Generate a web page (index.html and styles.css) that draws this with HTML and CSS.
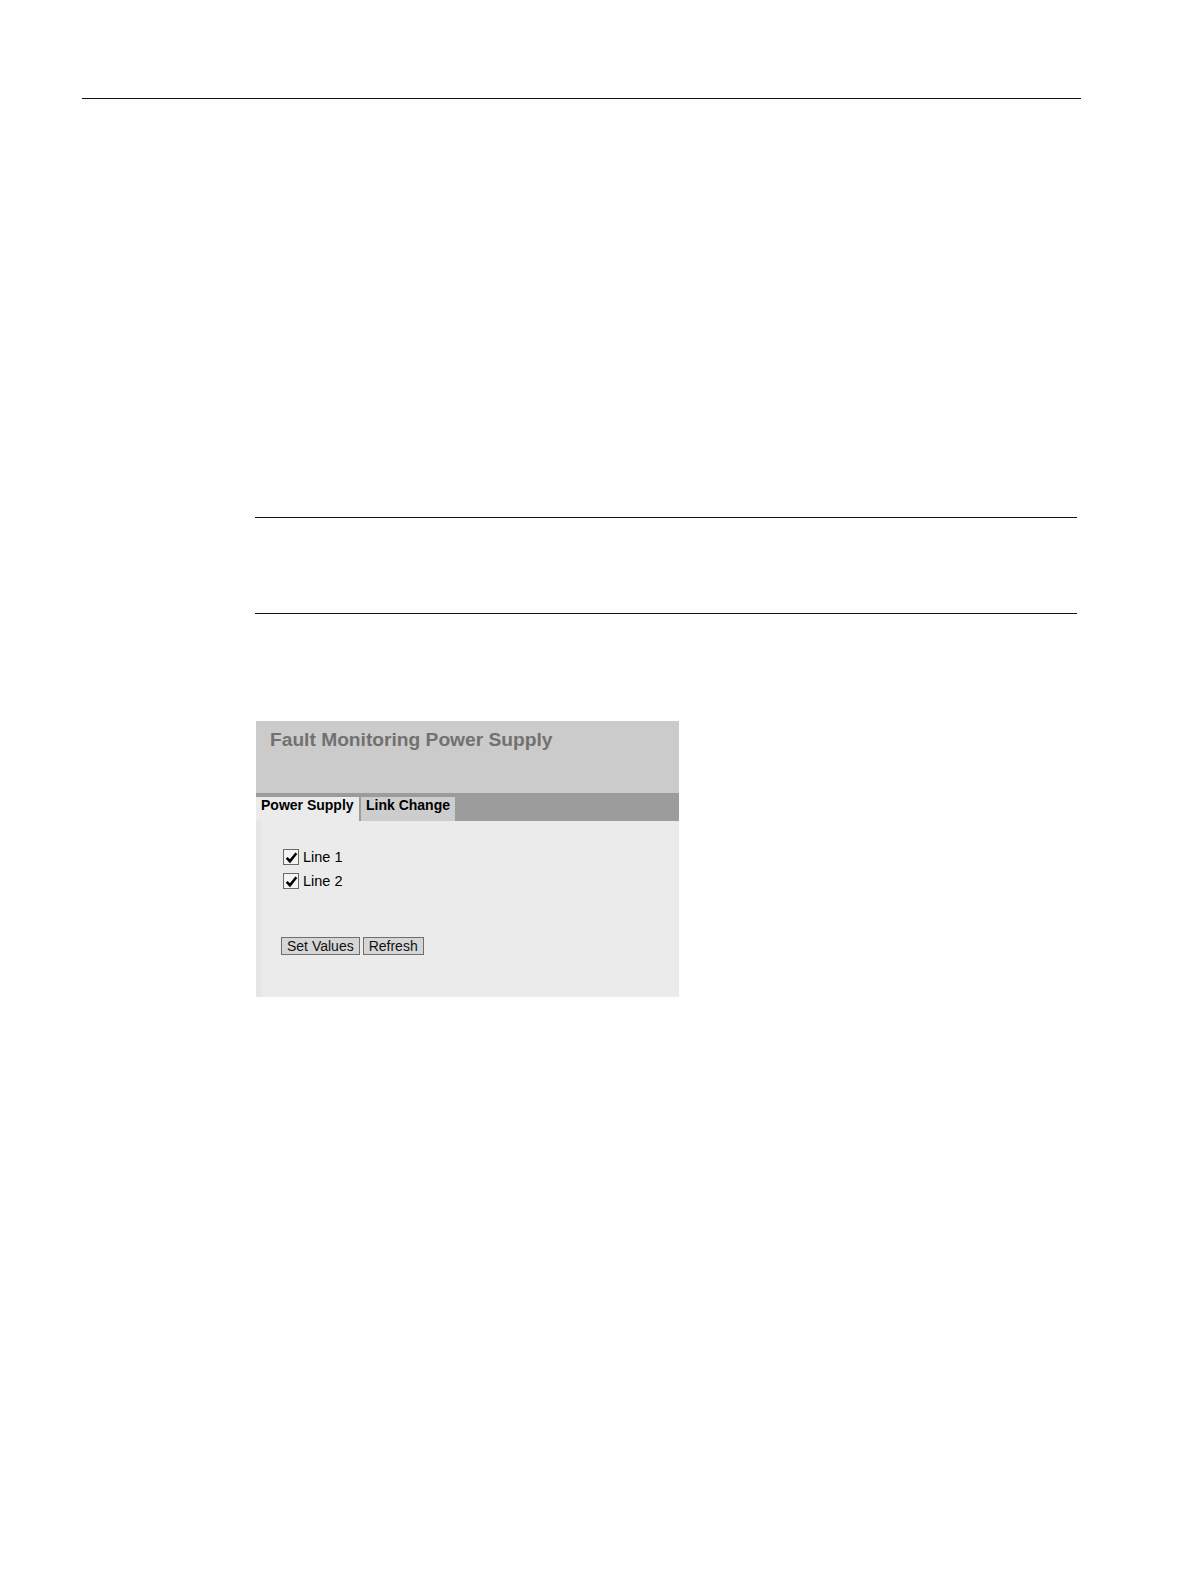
FILE: index.html
```html
<!DOCTYPE html>
<html lang="en">
<head>
<meta charset="utf-8">
<title>Fault Monitoring Power Supply</title>
<link rel="stylesheet" href="styles.css">
</head>
<body>
<div class="page">
  <div class="header-rule"></div>
  <div class="main">
    <div class="note"></div>
    <div class="figure">
      <div class="panel-head">
        <h1 class="panel-title">Fault Monitoring Power Supply</h1>
      </div>
      <div class="tabs">
        <div class="tab tab-active">Power Supply</div>
        <div class="tab">Link Change</div>
      </div>
      <div class="panel-body">
        <div class="checks">
          <label class="check"><span class="box"><svg viewBox="0 0 14 14" width="13" height="13"><path d="M1.8 7.4 L5.3 11 L12.2 2.4" fill="none" stroke="#000" stroke-width="2.8" stroke-linejoin="miter"/></svg></span><span class="check-label">Line 1</span></label>
          <label class="check"><span class="box"><svg viewBox="0 0 14 14" width="13" height="13"><path d="M1.8 7.4 L5.3 11 L12.2 2.4" fill="none" stroke="#000" stroke-width="2.8" stroke-linejoin="miter"/></svg></span><span class="check-label">Line 2</span></label>
        </div>
        <div class="buttons">
          <button class="btn" type="button">Set Values</button>
          <button class="btn" type="button">Refresh</button>
        </div>
      </div>
    </div>
  </div>
</div>
</body>
</html>
```

FILE: styles.css
```css
html, body {
  margin: 0;
  padding: 0;
  background: #fefefe;
}
body {
  font-family: "Liberation Sans", Arial, sans-serif;
  color: #000;
}
.page {
  padding-left: 82px;
  width: 999px;
  padding-bottom: 40px;
}
.header-rule {
  margin-top: 98px;
  border-top: 1px solid #111;
}
.main {
  margin-left: 173px;
  width: 822px;
}
.note {
  margin-top: 418px;
  height: 95px;
  border-top: 1px solid #111;
  border-bottom: 1px solid #111;
}
.figure {
  margin-top: 107px;
  margin-left: 1px;
  width: 423px;
  background: #ebebeb;
}
.panel-head {
  height: 72px;
  background: #cbcbcb;
  padding: 8px 14px 0;
  box-sizing: border-box;
}
.panel-title {
  margin: 0;
  font-size: 19.2px;
  line-height: 22px;
  font-weight: bold;
  color: #717171;
}
.tabs {
  display: flex;
  height: 28px;
  background: #9c9c9c;
  align-items: flex-end;
}
.tab {
  height: 24px;
  box-sizing: border-box;
  padding: 0 5px;
  font-size: 14px;
  line-height: 16px;
  font-weight: bold;
  background: #cdcdcd;
  color: #000;
  white-space: nowrap;
}
.tab-active {
  background: #ebebeb;
  width: 103px;
  margin-right: 2px;
}
.panel-body {
  height: 176px;
  box-sizing: border-box;
  border-left: 6px solid #e6e6e6;
  padding: 28px 0 0 19px;
}
.checks {
  display: flex;
  flex-direction: column;
  gap: 8px;
}
.check {
  display: flex;
  align-items: center;
  gap: 4px;
  font-size: 14.5px;
  line-height: 16px;
  margin-left: 2px;
}
.box {
  width: 14px;
  height: 14px;
  border: 1px solid #6a6a6a;
  background: #f4f4f4;
  display: flex;
  align-items: center;
  justify-content: center;
}
.box svg {
  display: block;
}
.buttons {
  display: flex;
  gap: 3px;
  margin-top: 48px;
}
.btn {
  font-family: "Liberation Sans", Arial, sans-serif;
  font-size: 14px;
  line-height: 16px;
  height: 18px;
  padding: 0 5px;
  margin: 0;
  background: #d6d6d6;
  border: 1px solid #6e6e6e;
  border-radius: 0;
  color: #111;
}
```
